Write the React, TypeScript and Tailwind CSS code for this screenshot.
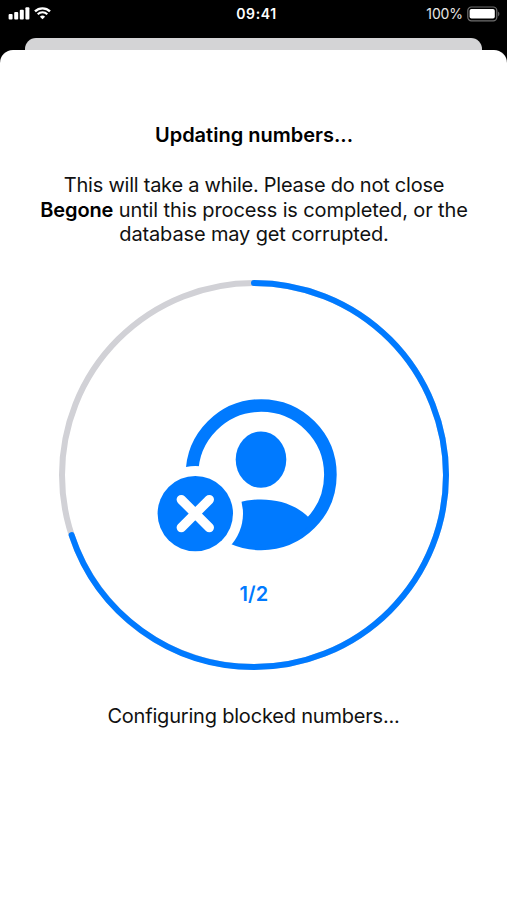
import React from 'react';

const RING_RADIUS = 192;
const RING_LENGTH = 2 * Math.PI * RING_RADIUS;

const StatusBar: React.FC = () => {
  return (
    <div className="grid h-[38px] grid-cols-3 items-start pr-[7px] pl-[8px] pt-[5px] text-white">
      <div className="flex items-center gap-[4px] pt-[2px]">
        <svg width="22" height="13" viewBox="0 0 22 13" fill="currentColor">
          <rect x="0.6" y="6.9" width="4" height="5.6" rx="1" />
          <rect x="6.2" y="5.1" width="4" height="7.4" rx="1" />
          <rect x="11.8" y="2.7" width="4" height="9.8" rx="1" />
          <rect x="17.4" y="0.2" width="4" height="12.3" rx="1" />
        </svg>
        <svg width="17" height="13" viewBox="0 0 17 13" fill="none" stroke="currentColor">
          <path d="M1 4.4a10.7 10.7 0 0 1 15 0" strokeWidth="2.4" />
          <path d="M3.7 7.3a6.8 6.8 0 0 1 9.6 0" strokeWidth="2.1" />
          <path d="M8.5 12.2 5.9 9.7a3.7 3.7 0 0 1 5.2 0Z" fill="currentColor" stroke="none" />
        </svg>
      </div>
      <div className="pl-[5px] text-center text-[14px] leading-[18px] font-semibold tracking-[0.6px]">09:41</div>
      <div className="flex items-center justify-end gap-[4px]">
        <span className="text-[14px] leading-[18px] tracking-[-0.1px] text-[#e6e6e6]">100%</span>
        <svg width="33" height="16" viewBox="0 0 33 16" fill="none">
          <rect x="0.8" y="1" width="29" height="13.8" rx="3.6" stroke="#6f6f6f" strokeWidth="1.2" />
          <rect x="2.6" y="3" width="25.2" height="9.6" rx="1.8" fill="#fff" />
          <path d="M31.2 5.6c1.6.8 1.6 4 0 4.8Z" fill="#6f6f6f" />
        </svg>
      </div>
    </div>
  );
};

const BlockedContactIcon: React.FC = () => {
  return (
    <svg width="180" height="154" viewBox="157 398 180 154" fill="#007aff">
      <defs>
        <mask id="badge-gap" maskUnits="userSpaceOnUse" x="157" y="398" width="180" height="154">
          <rect x="157" y="398" width="180" height="154" fill="#fff" />
          <circle cx="195.3" cy="513.6" r="47.7" fill="#000" />
        </mask>
        <clipPath id="avatar-clip">
          <circle cx="261" cy="474.7" r="70" />
        </clipPath>
      </defs>
      <g mask="url(#badge-gap)">
        <circle cx="261.2" cy="474.7" r="69.2" fill="none" stroke="#007aff" strokeWidth="12.6" />
        <ellipse cx="261" cy="459.6" rx="25.3" ry="28.2" />
        <path d="M214 516.7C226 505 243 499.4 261 499.4S296 505 308 516.7V552H214Z" clipPath="url(#avatar-clip)" />
      </g>
      <circle cx="195.3" cy="513.6" r="37.7" />
      <path d="M181.3 499.6l28 28M209.3 499.6l-28 28" stroke="#fff" strokeWidth="9.4" strokeLinecap="round" />
    </svg>
  );
};

const ProgressRing: React.FC<{ progress: number; step: string }> = ({ progress, step }) => {
  return (
    <div className="grid h-[390px] w-[391px]">
      <svg className="col-start-1 row-start-1" width="391" height="390" viewBox="0 0 391 390" fill="none" strokeWidth="6">
        <circle cx="196" cy="195" r={RING_RADIUS} stroke="#d1d1d6" />
        <circle
          cx="196"
          cy="195"
          r={RING_RADIUS}
          stroke="#007aff"
          strokeLinecap="round"
          strokeDasharray={`${RING_LENGTH * progress} ${RING_LENGTH}`}
          transform="rotate(-90 196 195)"
        />
      </svg>
      <div className="col-start-1 row-start-1 flex flex-col items-center pt-[118px]">
        <div className="mr-[13px]">
          <BlockedContactIcon />
        </div>
        <p className="mt-[30px] pl-[1px] text-[20px] leading-[24px] font-semibold tracking-[0.2px] text-[#007aff]">{step}</p>
      </div>
    </div>
  );
};

const App: React.FC = () => {
  return (
    <div className="flex h-[900px] w-[507px] flex-col overflow-hidden bg-black font-['Inter','Liberation_Sans',sans-serif] text-black">
      <StatusBar />

      {/* Sheet underneath */}
      <div className="mx-[25px] h-[12px] shrink-0 rounded-t-[11px] bg-[#d4d4d6]" />

      {/* Foreground sheet */}
      <main className="flex flex-1 flex-col items-center rounded-t-[13px] bg-white pt-[73px]">
        <h1 className="pl-[1px] text-[20px] leading-[25px] font-semibold">Updating numbers...</h1>
        <p className="mt-[25px] pl-[1px] text-center text-[20px] leading-[24.6px] whitespace-nowrap text-[#111]">
          <span className="tracking-[-0.24px]">This will take a while. Please do not close</span>
          <br />
          <span className="tracking-[-0.12px]">
            <strong className="font-semibold text-black">Begone</strong> until this process is completed, or the
          </span>
          <br />
          <span className="tracking-[-0.14px]">database may get corrupted.</span>
        </p>
        <div className="mt-[33px]">
          <ProgressRing progress={0.699} step="1/2" />
        </div>
        <p className="mt-[34px] text-[20px] leading-[25px] tracking-[-0.2px] text-[#111]">
          Configuring blocked numbers...
        </p>
      </main>
    </div>
  );
};

export default App;
